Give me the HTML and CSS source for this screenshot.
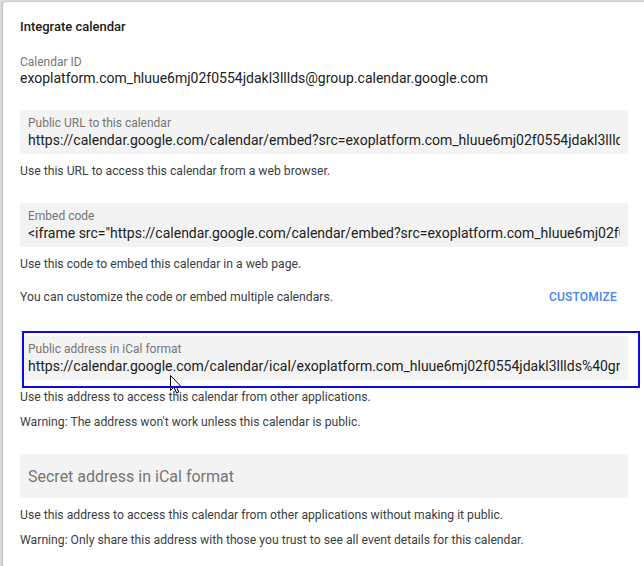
FILE: index.html
```html
<!DOCTYPE html>
<html>
<head>
<meta charset="utf-8">
<link rel="stylesheet" href="styles.css">
</head>
<body>
<div class="card">
  <h2 class="title">Integrate calendar</h2>

  <div class="id-block">
    <div class="id-label">Calendar ID</div>
    <div class="id-value">exoplatform.com_hluue6mj02f0554jdakl3lllds@group.calendar.google.com</div>
  </div>

  <div class="field first">
    <div class="field-label">Public URL to this calendar</div>
    <div class="field-value">https://calendar.google.com/calendar/embed?src=exoplatform.com_hluue6mj02f0554jdakl3lllds%40group.calendar.google.com&amp;ctz=Europe%2FParis</div>
  </div>
  <p class="help">Use this URL to access this calendar from a web browser.</p>

  <div class="field">
    <div class="field-label">Embed code</div>
    <div class="field-value">&lt;iframe src="https://calendar.google.com/calendar/embed?src=exoplatform.com_hluue6mj02f0554jdakl3lllds%40group.calendar.google.com"&gt;&lt;/iframe&gt;</div>
  </div>
  <p class="help">Use this code to embed this calendar in a web page.</p>
  <div class="customize-row">
    <span class="help-inline">You can customize the code or embed multiple calendars.</span>
    <span class="customize">CUSTOMIZE</span>
  </div>

  <div class="focus-wrap">
    <div class="field focused">
      <div class="field-label">Public address in iCal format</div>
      <div class="field-value">https://calendar.google.com/calendar/ical/exoplatform.com_hluue6mj02f0554jdakl3lllds%40group.calendar.google.com/public/basic.ics</div>
    </div>
    <svg class="cursor" width="12" height="19" viewBox="0 0 12 19">
      <path d="M0.5 0.5 L0.5 15.5 L4 12.2 L6.6 18 L8.8 17 L6.3 11.4 L11 11.4 Z" fill="#fff" stroke="#000" stroke-width="1" stroke-linejoin="miter"/>
    </svg>
  </div>
  <p class="help">Use this address to access this calendar from other applications.</p>
  <p class="help tight">Warning: The address won't work unless this calendar is public.</p>

  <div class="field secret">
    <div class="secret-text">Secret address in iCal format</div>
  </div>
  <p class="help">Use this address to access this calendar from other applications without making it public.</p>
  <p class="help tight">Warning: Only share this address with those you trust to see all event details for this calendar.</p>
</div>
</body>
</html>
```

FILE: styles.css
```css
html, body {
  margin: 0;
  padding: 0;
}
body {
  background: #dedede;
  font-family: Roboto, "Liberation Sans", Arial, sans-serif;
  overflow: hidden;
  height: 566px;
}
.card {
  background: #fff;
  margin: 2px -6px 0 3px;
  padding: 15px 22px 40px 17px;
  border-radius: 3px;
  box-shadow: -1px 0 2px rgba(0,0,0,0.18), 0 -1px 1px rgba(0,0,0,0.06);
  min-height: 600px;
}
.title {
  margin: 0;
  font-size: 13px;
  font-weight: 500;
  line-height: 20px;
  color: #212121;
}
.id-block {
  margin-top: 18px;
}
.id-label {
  font-size: 12px;
  line-height: 14px;
  color: #757575;
}
.id-value {
  font-size: 14px;
  line-height: 18px;
  color: #212121;
}
.field {
  background: #f3f3f3;
  height: 44px;
  box-sizing: border-box;
  padding: 6px 8px 0;
  border-radius: 2px;
  overflow: hidden;
  margin-top: 24px;
}
.field.first {
  margin-top: 23px;
}
.field-label {
  font-size: 12px;
  line-height: 14px;
  color: #757575;
}
.field-value {
  font-size: 14px;
  line-height: 20px;
  color: #212121;
  white-space: nowrap;
  overflow: hidden;
}
.help {
  margin: 9px 0 0;
  font-size: 12.2px;
  line-height: 16px;
  color: #3c4043;
}
.help.tight {
  margin-top: 9px;
}
.customize-row {
  display: flex;
  justify-content: space-between;
  align-items: center;
  margin-top: 17px;
  padding-right: 11px;
  font-size: 12.2px;
  line-height: 16px;
  color: #3c4043;
}
.customize {
  color: #4285f4;
  font-size: 12px;
  font-weight: 500;
  letter-spacing: 0.2px;
}
.focus-wrap {
  position: relative;
  margin-top: 31px;
}
.focus-wrap .field {
  margin-top: 0;
}
.focus-wrap::after {
  content: "";
  position: absolute;
  left: 2px;
  top: -5px;
  right: -12px;
  bottom: -8px;
  border: 2px solid #0b0bdf;
  pointer-events: none;
}
.cursor {
  position: absolute;
  left: 150px;
  top: 39px;
}
.field.secret {
  margin-top: 24px;
  padding: 0 8px;
  display: flex;
  align-items: center;
}
.secret-text {
  font-size: 16px;
  color: #757575;
}
```
